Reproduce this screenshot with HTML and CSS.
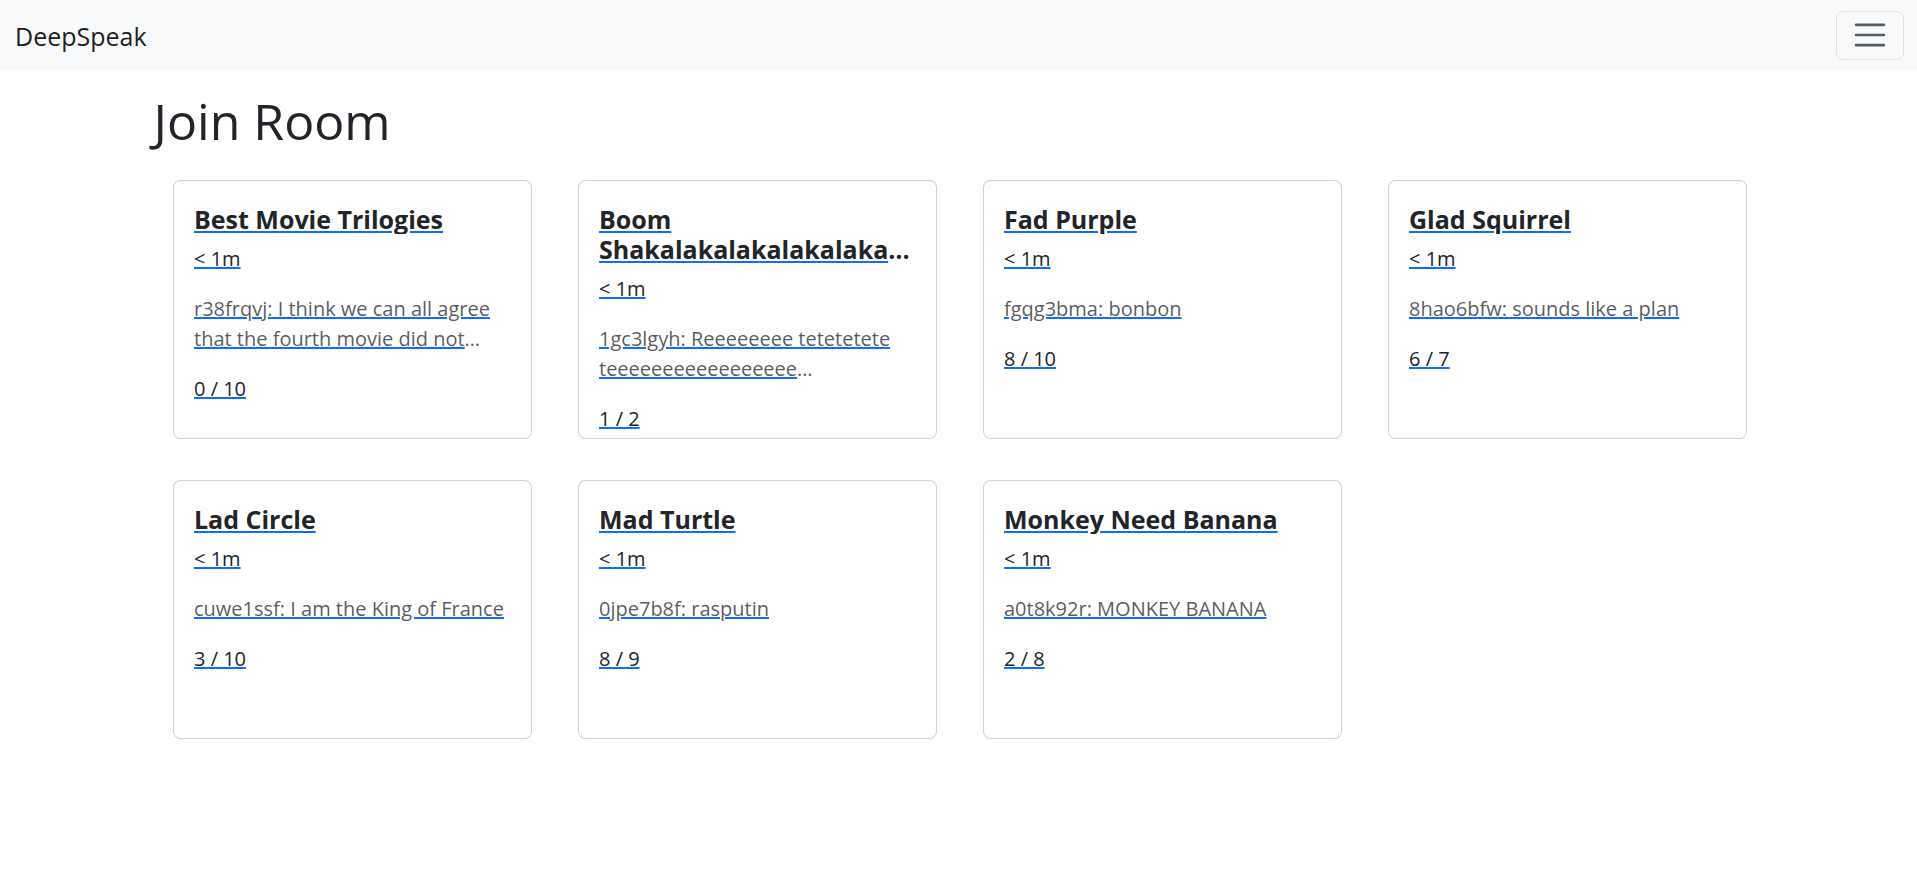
FILE: index.html
```html
<!DOCTYPE html>
<html lang="en">
<head>
<meta charset="utf-8">
<title>DeepSpeak</title>
<link rel="stylesheet" href="styles.css">
</head>
<body>
<nav class="navbar">
  <a class="brand" href="#">DeepSpeak</a>
  <button class="toggler" type="button" aria-label="Toggle navigation">
    <svg width="38" height="38" viewBox="0 0 30 30" aria-hidden="true"><path d="M4 7h22M4 15h22M4 23h22" stroke="rgba(33,37,41,0.75)" stroke-width="2" stroke-linecap="round" fill="none"/></svg>
  </button>
</nav>
<main class="main">
  <h1 class="page-title">Join Room</h1>
  <div class="room-grid">
    <a class="room-card" href="#">
      <h5 class="room-title">Best Movie Trilogies</h5>
      <h6 class="room-age">&lt; 1m</h6>
      <p class="room-msg">r38frqvj: I think we can all agree that the fourth movie did not deliver on the promise of the trilogy</p>
      <p class="room-count">0 / 10</p>
    </a>
    <a class="room-card" href="#">
      <h5 class="room-title">Boom Shakalakalakalakalaka Boomshakalakalakalakalaka</h5>
      <h6 class="room-age">&lt; 1m</h6>
      <p class="room-msg">1gc3lgyh: Reeeeeeee tetetetete teeeeeeeeeeeeeeeee eeeeeeeeeeeeeeeeeeeeeeeeeeeeeeeeeeeeeeeeee</p>
      <p class="room-count">1 / 2</p>
    </a>
    <a class="room-card" href="#">
      <h5 class="room-title">Fad Purple</h5>
      <h6 class="room-age">&lt; 1m</h6>
      <p class="room-msg">fgqg3bma: bonbon</p>
      <p class="room-count">8 / 10</p>
    </a>
    <a class="room-card" href="#">
      <h5 class="room-title">Glad Squirrel</h5>
      <h6 class="room-age">&lt; 1m</h6>
      <p class="room-msg">8hao6bfw: sounds like a plan</p>
      <p class="room-count">6 / 7</p>
    </a>
    <a class="room-card" href="#">
      <h5 class="room-title">Lad Circle</h5>
      <h6 class="room-age">&lt; 1m</h6>
      <p class="room-msg">cuwe1ssf: I am the King of France</p>
      <p class="room-count">3 / 10</p>
    </a>
    <a class="room-card" href="#">
      <h5 class="room-title">Mad Turtle</h5>
      <h6 class="room-age">&lt; 1m</h6>
      <p class="room-msg">0jpe7b8f: rasputin</p>
      <p class="room-count">8 / 9</p>
    </a>
    <a class="room-card" href="#">
      <h5 class="room-title">Monkey Need Banana</h5>
      <h6 class="room-age">&lt; 1m</h6>
      <p class="room-msg">a0t8k92r: MONKEY BANANA</p>
      <p class="room-count">2 / 8</p>
    </a>
  </div>
</main>
</body>
</html>
```

FILE: styles.css
```css
* { box-sizing: border-box; }

body {
  margin: 0;
  font-family: "Open Sans", "Noto Sans", "Liberation Sans", sans-serif;
  font-size: 20px;
  line-height: 1.5;
  color: #212529;
  background: #fff;
}

.navbar {
  height: 70px;
  background: #f8f9fa;
  display: flex;
  align-items: center;
  justify-content: space-between;
  padding: 0 13px 0 15px;
}

.brand {
  font-size: 25px;
  line-height: 37px;
  padding-top: 2px;
  color: rgba(0, 0, 0, 0.9);
  text-decoration: none;
}

.toggler {
  width: 68px;
  height: 49px;
  padding: 0;
  display: flex;
  align-items: center;
  justify-content: center;
  background: transparent;
  border: 1px solid rgba(0, 0, 0, 0.1);
  border-radius: 7.5px;
}

.main {
  width: 1620px;
  margin: 0 auto;
}

.page-title {
  margin: 21px 0 0 5px;
  font-size: 50px;
  font-weight: 400;
  line-height: 60px;
  color: #212529;
}

.room-grid {
  margin-top: 29px;
  padding-left: 24.5px;
  display: grid;
  grid-template-columns: repeat(4, 359px);
  column-gap: 46px;
  row-gap: 41px;
}

.room-card {
  display: block;
  height: 259px;
  padding: 23px 20px 20px;
  border: 1px solid rgba(0, 0, 0, 0.175);
  border-radius: 7.5px;
  background: #fff;
  color: #0d6efd;
  text-decoration: underline;
}

.room-title {
  margin: 0 0 10px;
  font-size: 25px;
  font-weight: 700;
  line-height: 30px;
  color: #212529;
  display: -webkit-box;
  -webkit-box-orient: vertical;
  -webkit-line-clamp: 2;
  overflow: hidden;
}

.room-age {
  margin: 0 0 20px;
  font-size: 20px;
  font-weight: 400;
  line-height: 30px;
  color: #212529;
}

.room-msg {
  margin: 0 0 20px;
  line-height: 30px;
  color: rgba(33, 37, 41, 0.75);
  display: -webkit-box;
  -webkit-box-orient: vertical;
  -webkit-line-clamp: 2;
  overflow: hidden;
}

.room-count {
  margin: 0;
  line-height: 30px;
  color: #212529;
}
```
